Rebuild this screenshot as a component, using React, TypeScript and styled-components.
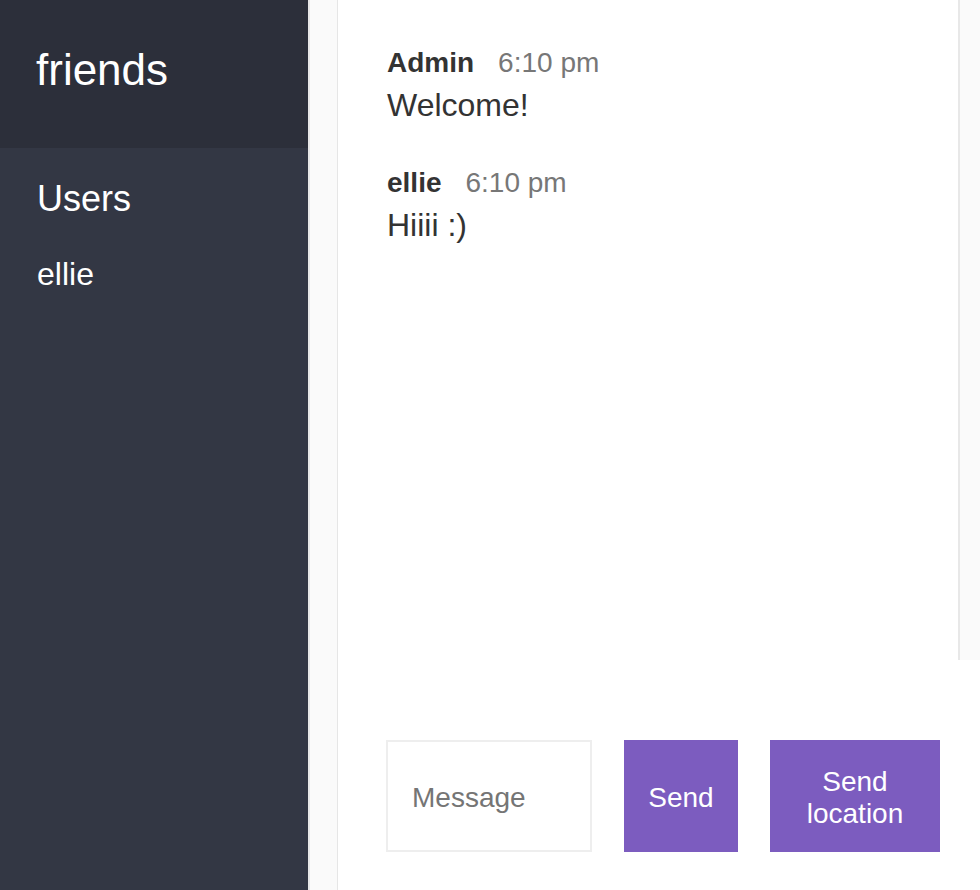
import React from "react";
import styled, { createGlobalStyle } from "styled-components";

const Global = createGlobalStyle`
  * { box-sizing: border-box; margin: 0; padding: 0; }
  html, body { width: 980px; height: 890px; overflow: hidden; background: #fff; }
  body { font-family: "Liberation Sans", Arial, Helvetica, sans-serif; color: #333; }
`;

const Chat = styled.div`
  display: flex;
  width: 980px;
  height: 890px;
  overflow: hidden;
`;

const Sidebar = styled.aside`
  display: flex;
  flex-shrink: 0;
  width: 338px;
  height: 100%;
`;

const SidebarBody = styled.div`
  display: flex;
  flex-direction: column;
  width: 308px;
  background: #333744;
  color: #fff;
`;

const ScrollTrack = styled.div<{ $width: number }>`
  flex-shrink: 0;
  width: ${(p) => p.$width}px;
  background: #fafafa;
  border-left: 2px solid #e8e8e8;
  border-right: ${(p) => (p.$width > 25 ? "1px solid #e6e6e6" : "none")};
`;

const RoomTitle = styled.h3`
  height: 148px;
  padding: 45px 36px 0;
  background: #2c2f3a;
  font-size: 44px;
  line-height: 50px;
  font-weight: 400;
`;

const ListTitle = styled.h4`
  padding: 30px 37px 0;
  font-size: 36px;
  line-height: 42px;
  font-weight: 500;
`;

const Users = styled.ul`
  list-style: none;
  padding: 36px 37px 0;
  font-size: 32px;
  line-height: 37px;
  font-weight: 300;
`;

const Main = styled.main`
  display: flex;
  flex-direction: column;
  flex: 1;
  min-width: 0;
  height: 100%;
`;

const MessagesArea = styled.div`
  display: flex;
  flex: 1;
  min-height: 0;
`;

const MessageList = styled.div`
  flex: 1;
  padding: 45px 48px 0 49px;
`;

const Message = styled.div`
  margin-bottom: 41px;
`;

const Meta = styled.p`
  font-size: 28px;
  line-height: 36px;
  margin-bottom: 6px;
`;

const Name = styled.span`
  font-weight: 700;
  color: #333;
  margin-right: 24px;
`;

const Time = styled.span`
  color: #777;
`;

const Body = styled.p`
  font-size: 32px;
  line-height: 37px;
  color: #333;
`;

const Compose = styled.div`
  display: flex;
  flex-shrink: 0;
  margin-top: 32px;
  padding: 48px 0 38px 48px;
`;

const Form = styled.form`
  display: flex;
  margin-right: 32px;
`;

const Input = styled.input`
  width: 206px;
  margin-right: 32px;
  padding: 26px 24px 22px;
  border: 2px solid #eeeeee;
  font-family: "Liberation Sans", Arial, sans-serif;
  font-size: 28px;
  color: #333;
  outline: none;
  &::placeholder { color: #757575; }
`;

const Button = styled.button<{ $width: number }>`
  width: ${(p) => p.$width}px;
  padding: 26px 24px 22px;
  background: #7c5cbf;
  border: none;
  color: #fff;
  font-family: "Liberation Sans", Arial, sans-serif;
  font-size: 28px;
  line-height: 32px;
  text-align: center;
  cursor: pointer;
`;

const messages = [
  { name: "Admin", time: "6:10 pm", text: "Welcome!" },
  { name: "ellie", time: "6:10 pm", text: "Hiiii :)" },
];

export default function App() {
  return (
    <>
      <Global />
      <Chat>
        <Sidebar>
          <SidebarBody>
            <RoomTitle>friends</RoomTitle>
            <ListTitle>Users</ListTitle>
            <Users>
              <li>ellie</li>
            </Users>
          </SidebarBody>
          <ScrollTrack $width={30} />
        </Sidebar>
        <Main>
          <MessagesArea>
            <MessageList>
              {messages.map((m, i) => (
                <Message key={i}>
                  <Meta>
                    <Name>{m.name}</Name>
                    <Time>{m.time}</Time>
                  </Meta>
                  <Body>{m.text}</Body>
                </Message>
              ))}
            </MessageList>
            <ScrollTrack $width={22} />
          </MessagesArea>
          <Compose>
            <Form onSubmit={(e) => e.preventDefault()}>
              <Input placeholder="Message" />
              <Button $width={114}>Send</Button>
            </Form>
            <Button $width={170}>Send location</Button>
          </Compose>
        </Main>
      </Chat>
    </>
  );
}
